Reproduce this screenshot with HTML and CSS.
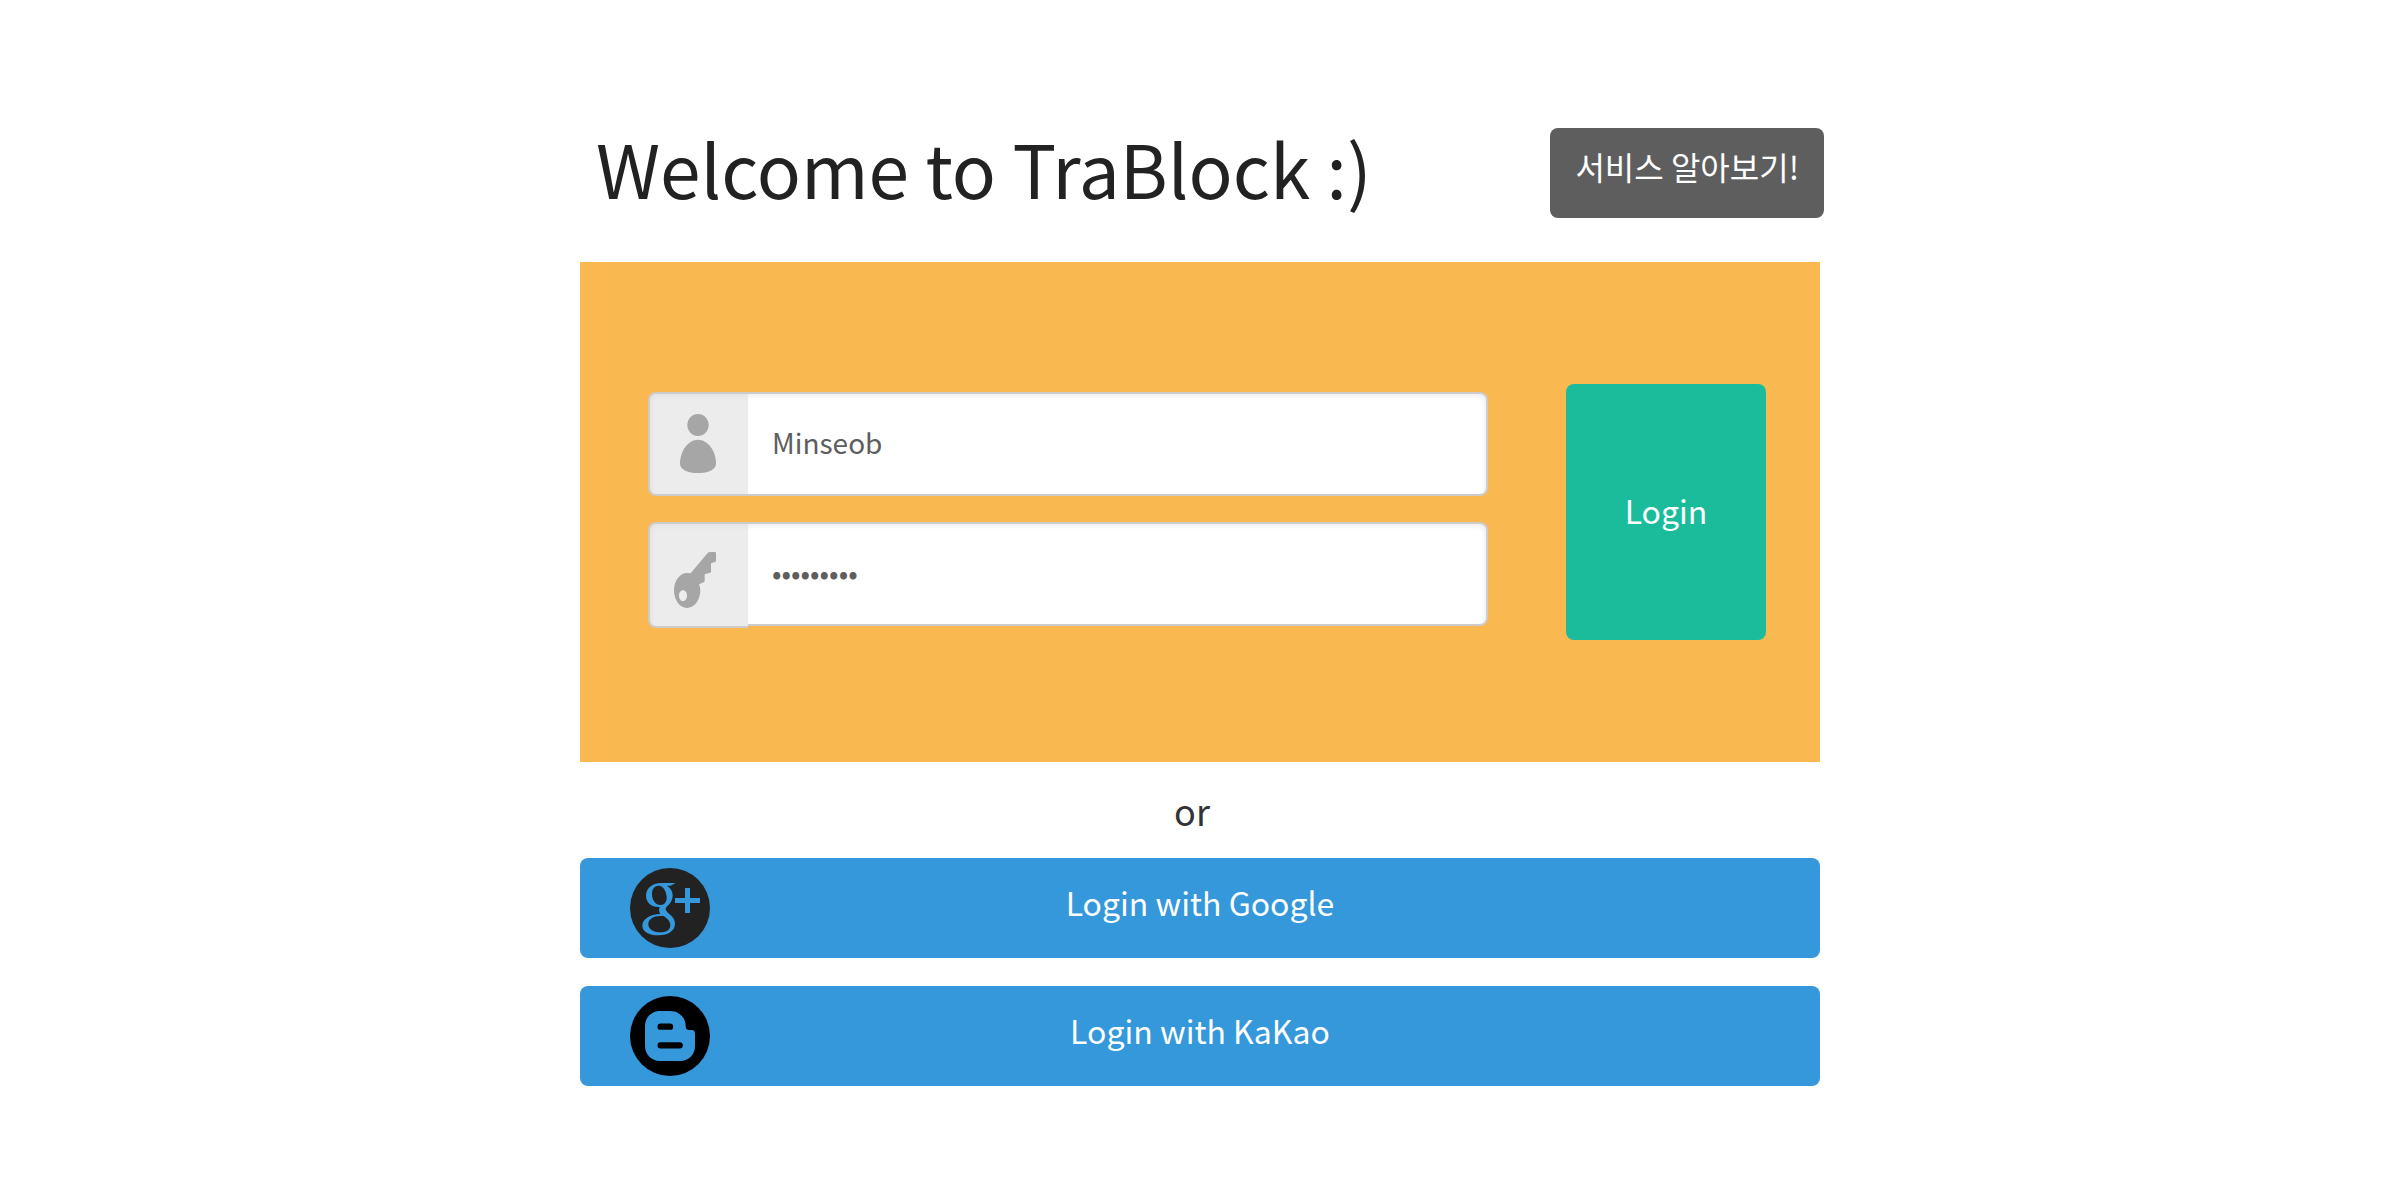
FILE: index.html
```html
<!DOCTYPE html>
<html lang="en">
<head>
<meta charset="utf-8">
<meta name="viewport" content="width=device-width, initial-scale=1">
<title>TraBlock</title>
<link rel="stylesheet" href="styles.css">
</head>
<body>
<main class="page">
  <header class="header">
    <h1 class="title">Welcome to TraBlock :)</h1>
    <button class="btn btn-about" type="button">서비스 알아보기!</button>
  </header>

  <form class="panel">
    <div class="fields">
      <div class="field">
        <label class="addon" for="username" aria-label="Username">
          <svg class="addon-icon" viewBox="60 72 294 300" aria-hidden="true">
            <ellipse cx="204" cy="165" rx="32" ry="33"/>
            <path d="M204 209C233 209 258 242 258 281C258 299 234 309 204 309S150 299 150 281C150 242 175 209 204 209Z"/>
          </svg>
        </label>
        <input class="input" id="username" type="text" value="Minseob">
      </div>
      <div class="field">
        <label class="addon addon-tall" for="password" aria-label="Password">
          <svg class="addon-icon" viewBox="60 462 294 306" aria-hidden="true">
            <path fill-rule="evenodd" d="M182 610L233 549Q236 546 240 546H254Q258 546 258 550V572Q258 575 255 576L243 580V605Q243 608 240 608L224 613V633Q224 636 221 637L207 643Q211 651 211 661C211 690 193 714 171 714S132 690 132 661S150 609 171 609Q177 609 182 610ZM159 661C152 661 147 668 147 677S152 693 159 693S171 686 171 677S166 661 159 661Z"/>
          </svg>
        </label>
        <input class="input" id="password" type="password" value="trablock1">
      </div>
    </div>
    <button class="btn btn-login" type="submit">Login</button>
  </form>

  <p class="divider">or</p>

  <div class="socials">
    <button class="btn btn-social" type="button">
      <svg class="social-icon" viewBox="0 0 240 240" aria-hidden="true">
        <circle cx="120" cy="120" r="120" fill="#222"/>
        <path fill="#3498db" fill-rule="evenodd" d="M137 45L122 53H111C122 60 128 70 128 82C128 97 121 106 113 113C108 117 107 119 107 123C107 128 112 133 119 139C130 148 135 156 135 168C135 187 116 202 85 202C56 202 37 190 37 173C37 153 60 139 91 138C87 133 86 126 89 117C63 118 48 102 48 83C48 62 66 45 93 45ZM85 53C72 54 65 65 66 80C67 97 77 111 91 111C104 111 111 101 110 87C109 69 99 52 85 53ZM96 144C73 142 55 152 55 168C55 183 69 193 91 193C112 193 121 184 121 171C121 160 112 152 101 144Z"/>
        <path fill="#3498db" d="M165 60h15v30h30v15h-30v30h-15v-30h-30v-15h30z"/>
      </svg>
      <span>Login with Google</span>
    </button>
    <button class="btn btn-social" type="button">
      <svg class="social-icon" viewBox="0 0 240 240" aria-hidden="true">
        <circle cx="120" cy="120" r="120"/>
        <path fill="#3498db" d="M90 45h31c26 0 46 20 46 44c0 8 3 13 11 13h7c7 0 10 4 10 11v37c0 26-19 45-44 45H90c-25 0-45-19-45-45V90c0-26 20-45 45-45z"/>
        <path fill="none" stroke="#000" stroke-width="19" stroke-linecap="round" d="M92 92h28M92 148h57"/>
      </svg>
      <span>Login with KaKao</span>
    </button>
  </div>
</main>
</body>
</html>
```
FILE: styles.css
```css
*, *::before, *::after { box-sizing: border-box; }

body {
  margin: 0;
  background: #fff;
  color: #222;
  font-family: "Noto Sans CJK JP", "Noto Sans CJK KR", sans-serif;
  font-size: 32px;
  line-height: 48px;
}

.page {
  max-width: 1240px;
  margin: 0 auto;
  padding: 128px 0;
}

.header {
  display: flex;
  justify-content: space-between;
  align-items: flex-start;
  margin: 0 -4px 44px 0;
}

.title {
  margin: 0;
  padding-left: 16px;
  font-size: 73px;
  font-weight: 400;
  line-height: 78px;
}

.btn {
  border: 0;
  border-radius: 8px;
  color: #fff;
  font: inherit;
  cursor: pointer;
}

.btn-about {
  padding: 14px 25px 28px;
  background: #5e5e5e;
}

.panel {
  display: flex;
  align-items: stretch;
  gap: 78px;
  padding: 122px 54px 122px 68px;
  background: #f9b850;
}

.fields {
  flex: 1;
  display: flex;
  flex-direction: column;
  gap: 26px;
  padding: 8px 0 14px;
}

.field {
  display: flex;
  align-items: flex-start;
  height: 104px;
}

.addon {
  flex: none;
  width: 100px;
  height: 104px;
  border: 2px solid #ccc;
  border-right: 0;
  border-radius: 8px 0 0 8px;
  background: #ececec;
  box-shadow: inset 2px 3px 4px rgba(0, 0, 0, 0.03);
}

.addon-tall { height: 106px; }

.addon-icon {
  display: block;
  width: 100%;
  height: 100%;
  fill: #a6a6a6;
}

.input {
  flex: 1;
  min-width: 0;
  height: 104px;
  padding: 0 24px 4px;
  border: 2px solid #ccc;
  border-left: 0;
  border-radius: 0 8px 8px 0;
  background: #fff;
  box-shadow: inset -2px 3px 4px rgba(0, 0, 0, 0.06);
  color: #5e5e5e;
  font: inherit;
  font-size: 28px;
  outline: 0;
}

.btn-login {
  flex: none;
  width: 200px;
  min-height: 256px;
  padding-bottom: 6px;
  background: #1bbc9b;
}

.divider {
  margin: 0;
  padding-right: 16px;
  color: #333;
  font-size: 36px;
  line-height: 96px;
  text-align: center;
}

.socials {
  display: grid;
  gap: 28px;
}

.btn-social {
  position: relative;
  padding: 20px 24px 32px;
  background: #3498db;
}

.social-icon {
  position: absolute;
  top: 10px;
  left: 50px;
  width: 80px;
  height: 80px;
}
```
